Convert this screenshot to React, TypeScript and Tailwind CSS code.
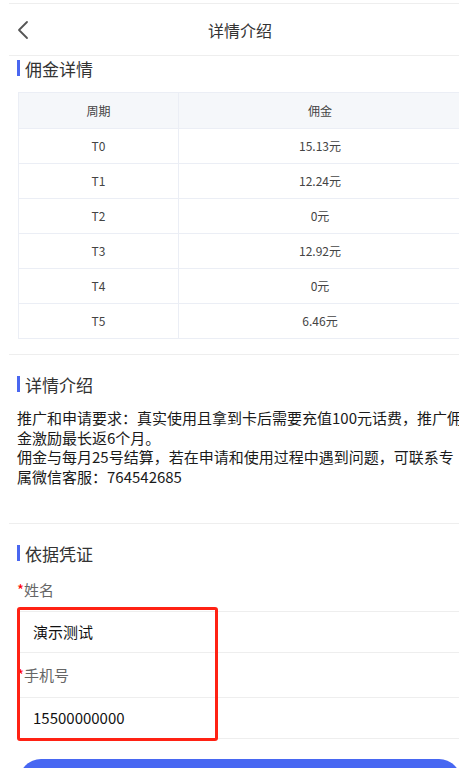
import React from 'react';

const ROWS = [
  { period: 'T0', amount: '15.13元' },
  { period: 'T1', amount: '12.24元' },
  { period: 'T2', amount: '0元' },
  { period: 'T3', amount: '12.92元' },
  { period: 'T4', amount: '0元' },
  { period: 'T5', amount: '6.46元' },
];

const FONT = { fontFamily: '"Noto Sans CJK SC", "Liberation Sans", sans-serif' };

function SectionTitle({ text }: { text: string }) {
  return (
    <div className="flex items-center h-[24px] pl-[17px]">
      <span className="w-[3px] h-[16px] bg-[#4a67f0]" />
      <span className="ml-[5px] text-[17px] leading-none text-[#333]">{text}</span>
    </div>
  );
}

function Divider() {
  return <div className="mx-[9px] h-px bg-[#eeeeee]" />;
}

export default function App() {
  return (
    <div className="relative w-[459px] h-[768px] overflow-hidden bg-white" style={FONT}>
      <div className="w-[480px]">
        <div className="h-[3px]" />
        <Divider />

        {/* header */}
        <div className="relative flex items-center justify-center h-[51px]">
          <svg className="absolute left-[16px] top-[16px]" width="14" height="20" viewBox="0 0 14 20" fill="none">
            <path d="M11 2 L3 10 L11 18" stroke="#555" strokeWidth="1.8" strokeLinecap="round" strokeLinejoin="round" />
          </svg>
          <span className="text-[16px] text-[#333]">详情介绍</span>
        </div>
        <Divider />

        <SectionTitle text="佣金详情" />

        {/* commission table */}
        <div className="mx-[18px] mt-[12px] border border-[#ebeef5] text-[12px] text-[#444]">
          <div className="flex h-[35px] bg-[#f5f7fa]">
            <div className="w-[160px] flex items-center justify-center border-r border-[#ebeef5]">周期</div>
            <div className="flex-1 flex items-center justify-center">佣金</div>
          </div>
          {ROWS.map(row => (
            <div key={row.period} className="flex h-[35px] border-t border-[#ebeef5]">
              <div className="w-[160px] flex items-center justify-center border-r border-[#ebeef5]">{row.period}</div>
              <div className="flex-1 flex items-center justify-center">{row.amount}</div>
            </div>
          ))}
        </div>

        <div className="mt-[15px]" />
        <Divider />

        <div className="mt-[17px]">
          <SectionTitle text="详情介绍" />
        </div>
        <p className="ml-[17px] mt-[12px] w-[448px] text-[15px] leading-[19.6px] text-[#1a1a1a]">
          推广和申请要求：真实使用且拿到卡后需要充值100元话费，推广佣金激励最长返6个月。
          <br />
          佣金与每月25号结算，若在申请和使用过程中遇到问题，可联系专属微信客服：764542685
        </p>

        <div className="mt-[37px]" />
        <Divider />

        <div className="mt-[17px]">
          <SectionTitle text="依据凭证" />
        </div>

        {/* form */}
        <div className="ml-[17px]">
          <div className="flex items-center h-[46px] pt-[3px] text-[15px] text-[#666]">
            <span className="text-[#f00]">*</span>姓名
          </div>
          <div className="flex items-center h-[42px] border-y border-[#eeeeee] pl-[16px] text-[15px] text-[#111]">
            演示测试
          </div>
          <div className="flex items-center h-[44px] text-[15px] text-[#666]">
            <span className="text-[#f00]">*</span>手机号
          </div>
          <div className="flex items-center h-[42px] border-y border-[#eeeeee] pl-[16px] text-[15px] text-[#111]">
            15500000000
          </div>
        </div>

        <div className="mx-[19px] mt-[20px] h-[44px] rounded-full bg-[#4767f2]" />
      </div>

      {/* annotation box */}
      <div className="absolute left-[17px] top-[607px] w-[201px] h-[134px] border-[3px] border-[#ff2214] rounded-[3px]" />
    </div>
  );
}
